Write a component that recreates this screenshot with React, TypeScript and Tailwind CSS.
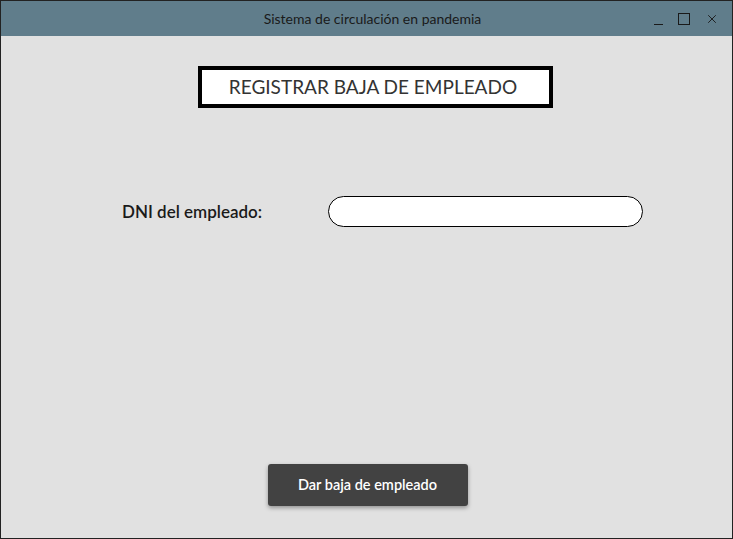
import { X } from 'lucide-react';

const App = () => {
  return (
    <div
      className="w-[733px] h-[539px] flex flex-col border border-[#222] bg-[#e1e1e1] overflow-hidden"
      style={{ fontFamily: 'Lato, "Open Sans", sans-serif' }}
    >
      {/* Title bar */}
      <div className="h-[35px] bg-[#607d8b] flex items-center relative shrink-0">
        <div className="flex-1 pl-[12px] text-center text-[14px] text-[#1a1a1a]">Sistema de circulación en pandemia</div>
        <div className="absolute right-[13px] top-0 h-full flex items-center gap-[15px] text-[#1a1a1a]">
          <span className="w-[9px] h-[10px] border-b-[1.5px] border-[#1a1a1a] translate-y-[1px]"></span>
          <span className="w-[12px] h-[12px] border-[1.5px] border-[#1a1a1a]"></span>
          <X size={14} strokeWidth={1.6} />
        </div>
      </div>

      {/* Content */}
      <div className="flex-1 flex flex-col items-center">
        <div className="mt-[30px] ml-[17px] w-[355px] h-[42px] border-[4px] border-black bg-white flex items-center justify-center">
          <span className="text-[19px] text-[#333] -translate-x-[2px]">REGISTRAR BAJA DE EMPLEADO</span>
        </div>

        <div className="mt-[88px] w-full flex items-center">
          <div className="w-[327px] pl-[121px] text-[17px] font-semibold text-[#1a1a1a]">DNI del empleado:</div>
          <input
            type="text"
            className="w-[315px] h-[31px] rounded-full border border-black bg-white outline-none px-3"
          />
        </div>

        <div className="flex-1"></div>

        <button className="mb-[32px] ml-[2px] w-[200px] h-[42px] bg-[#424242] text-white text-[14.5px] font-semibold rounded-[3px] shadow-[0_2px_4px_rgba(0,0,0,0.35)]">
          Dar baja de empleado
        </button>
      </div>
    </div>
  );
};

export default App;
